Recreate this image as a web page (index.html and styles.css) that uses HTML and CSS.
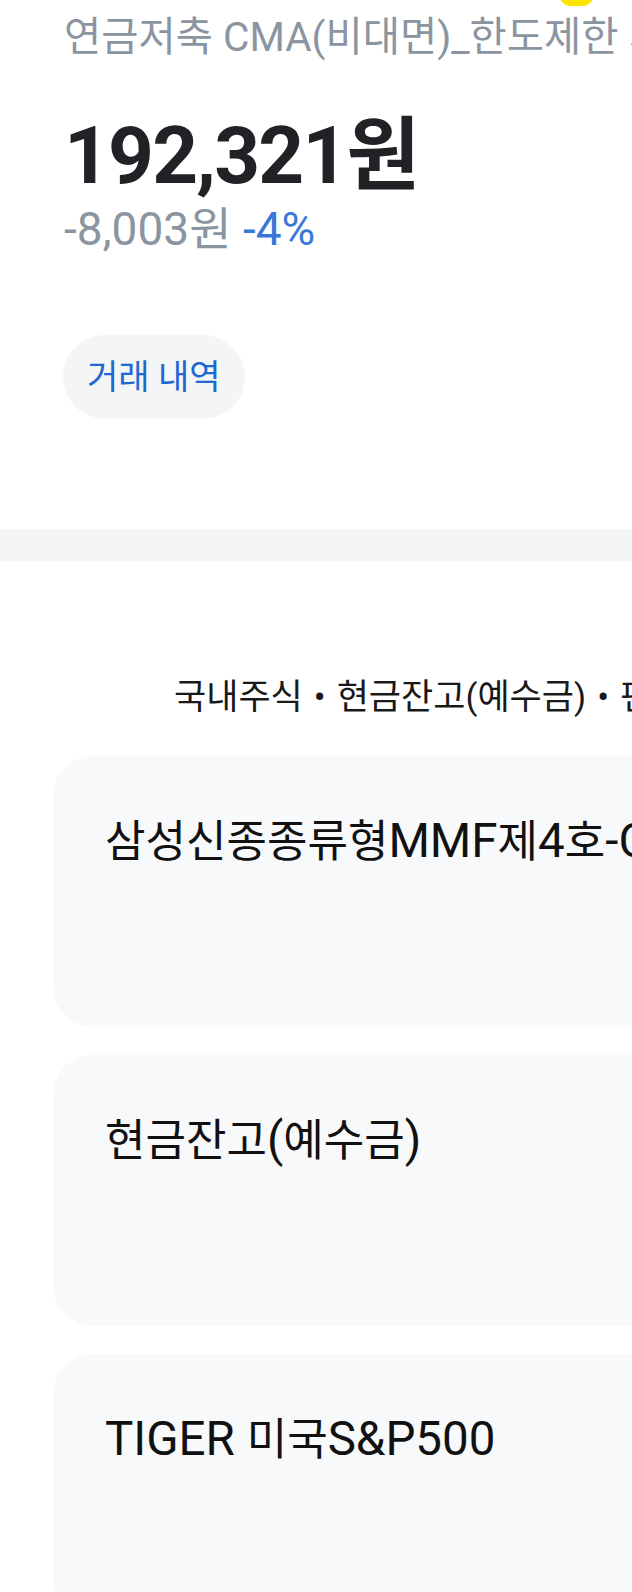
FILE: index.html
```html
<!DOCTYPE html>
<html lang="ko">
<head>
<meta charset="utf-8">
<title>연금저축 CMA</title>
<link rel="stylesheet" href="styles.css">
</head>
<body>
<div class="screen">
  <span class="badge-dot"></span>
  <header class="summary">
    <div class="account-name">연금저축 CMA(비대면)_한도제한 계좌</div>
    <div class="total">192,321원</div>
    <div class="change"><span class="change-amount">-8,003원</span> <span class="change-rate">-4%</span></div>
    <button class="history-btn" type="button">거래 내역</button>
  </header>
  <div class="band"></div>
  <section class="holdings">
    <div class="legend">국내주식<span class="sep">•</span>현금잔고(예수금)<span class="sep">•</span>펀드</div>
    <div class="cards">
      <div class="card"><div class="card-title">삼성신종종류형<span class="lat">MMF</span>제<span class="lat">4</span>호<span class="lat">-C</span></div></div>
      <div class="card"><div class="card-title">현금잔고<span class="lat">(</span>예수금<span class="lat">)</span></div></div>
      <div class="card"><div class="card-title"><span class="lat">TIGER </span>미국<span class="lat">S&amp;P500</span></div></div>
    </div>
  </section>
</div>
</body>
</html>
```
FILE: styles.css
```css
* { box-sizing: border-box; }
html, body {
  margin: 0;
  padding: 0;
  background: #ffffff;
}
body {
  font-family: Roboto, "Noto Sans CJK KR", sans-serif;
  overflow: hidden;
  width: 632px;
  height: 1592px;
}
.screen {
  position: relative;
  width: 632px;
  overflow: hidden;
}
.badge-dot {
  position: absolute;
  left: 559px;
  top: -24px;
  width: 35px;
  height: 30px;
  border-radius: 12px;
  background: #fde500;
}
.summary {
  padding: 13px 0 0 64px;
  display: flex;
  flex-direction: column;
  align-items: flex-start;
}
.account-name {
  font-size: 40.5px;
  line-height: 48px;
  color: #8b95a1;
  white-space: nowrap;
}
.total {
  margin-top: 48px;
  font-size: 80px;
  line-height: 94px;
  font-weight: 700;
  color: #202226;
  letter-spacing: -1.8px;
  white-space: nowrap;
}
.change {
  margin-top: -2px;
  font-size: 46px;
  line-height: 56px;
  color: #8b95a1;
  white-space: nowrap;
}
.change-rate { color: #3a78d8; }
.history-btn {
  margin-top: 78px;
  margin-left: -1px;
  height: 84px;
  padding: 0 24px;
  border: none;
  border-radius: 42px;
  background: #f3f5f7;
  color: #1f67d2;
  font-family: Roboto, "Noto Sans CJK KR", sans-serif;
  font-size: 34px;
  line-height: 84px;
}
.band {
  margin-top: 110px;
  height: 32px;
  background: #f4f5f7;
}
.holdings {
  padding-top: 117px;
}
.legend {
  padding-left: 174px;
  font-size: 35px;
  line-height: 40px;
  color: #191919;
  white-space: nowrap;
}
.sep {
  padding: 0 11px;
}
.cards {
  margin-top: 38px;
  padding-left: 53px;
  margin-right: -300px;
  display: flex;
  flex-direction: column;
  gap: 28px;
}
.card {
  height: 271px;
  border-radius: 40px;
  background: #f8f9fb;
  padding: 57px 0 0 52px;
}
.card-title {
  font-size: 44px;
  line-height: 56px;
  color: #111111;
  white-space: nowrap;
}
.lat {
  font-size: 47.5px;
}
```
